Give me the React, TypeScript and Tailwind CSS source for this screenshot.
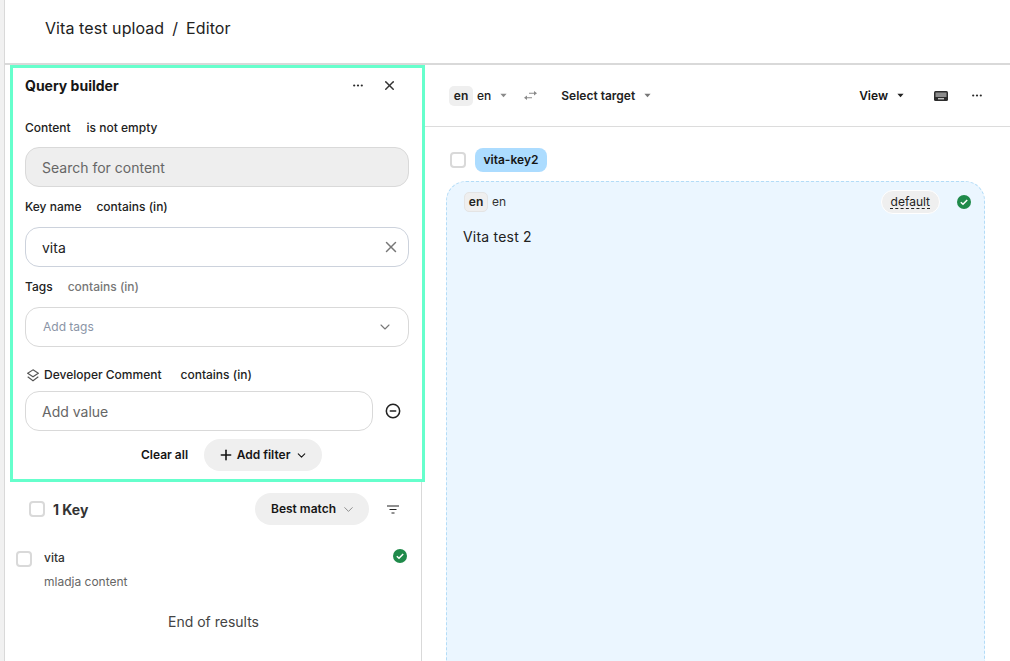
import { ChevronDown, Plus, X, CircleMinus } from "lucide-react";

function Caret({ className = "text-[#6f6f6f]" }: { className?: string }) {
  return (
    <svg viewBox="0 0 8 5" width="7" height="5" className={className} fill="currentColor" aria-hidden>
      <path d="M0.5 0.5h7L4 4.5Z" />
    </svg>
  );
}

function Check() {
  return (
    <svg viewBox="0 0 14 14" width="14" height="14" aria-hidden>
      <circle cx="7" cy="7" r="7" fill="#1f8a4a" />
      <path d="M3.8 7.2 6 9.3l4.2-4.4" fill="none" stroke="#fff" strokeWidth="1.5" />
    </svg>
  );
}

function Box() {
  return <span className="block h-4 w-4 shrink-0 rounded-[4px] border-2 border-[#d9d9d9] bg-white" />;
}

function Dots() {
  return (
    <svg viewBox="0 0 10 3" width="10" height="3" fill="#2a2a2a" aria-hidden>
      <circle cx="1.200" cy="1.500" r="1.100" />
      <circle cx="5" cy="1.500" r="1.100" />
      <circle cx="8.800" cy="1.500" r="1.100" />
    </svg>
  );
}

function KeyboardIcon() {
  return (
    <svg viewBox="0 0 14 10" width="14" height="10" aria-hidden>
      <rect width="14" height="10" rx="1.500" fill="#2c2c2c" />
      <rect x="1.500" y="1.500" width="11" height="4.500" fill="#8c8c8c" />
      <rect x="4" y="7.300" width="6" height="1" fill="#fff" />
    </svg>
  );
}

function SwapIcon() {
  return (
    <svg viewBox="0 0 13 9" width="13" height="9" fill="#8a8a8a" aria-hidden>
      <path d="M5 1.700h5V0l3 2.200-3 2.200V2.700H5Z" />
      <path d="M8 6.300H3V4.600L0 6.800 3 9V7.300h5Z" />
    </svg>
  );
}

function LayersIcon() {
  return (
    <svg viewBox="0 0 12 13" width="12" height="13" fill="none" stroke="#555" strokeWidth="1.100" aria-hidden>
      <path d="M6 .8 11.300 4.300 6 7.800.7 4.300Z" />
      <path d="M.7 7.800 6 11.800l5.300-4" />
    </svg>
  );
}

function SortLines() {
  return (
    <svg viewBox="0 0 12 9" width="12" height="9" fill="none" stroke="#222" strokeWidth="1.200" aria-hidden>
      <path d="M0 1h12M2.500 4.500h7M4.500 8h3" />
    </svg>
  );
}

function QueryBuilder() {
  return (
    <div className="relative z-10 ml-[5px] flex h-[417px] w-[415px] flex-col border-[3px] border-[#66ffcc] bg-white pl-3 pr-3">
      <div className="flex h-[33px] items-center justify-between pt-[1px]">
        <h2 className="text-[14px] font-bold text-[#161616]">Query builder</h2>
        <div className="flex items-center gap-[19px] pr-[13px]">
          <Dots />
          <X size={15} strokeWidth={2.400} className="text-[#333]" />
        </div>
      </div>
      <div className="mt-[17px] flex h-5 items-center gap-4 text-[12px] font-medium text-[#222]">
        <span>Content</span>
        <span>is not empty</span>
      </div>
      <div className="mt-[9px] flex h-10 w-[384px] items-center rounded-[14px] border border-[#d9d9d9] bg-[#eeeeee] pl-4 text-[14px] text-[#666]">
        Search for content
      </div>
      <div className="mt-[10px] flex h-5 items-center gap-[15px] text-[12px] font-medium text-[#222]">
        <span>Key name</span>
        <span>contains (in)</span>
      </div>
      <div className="mt-[10px] flex h-10 w-[384px] items-center justify-between rounded-[14px] border border-[#ccd2dc] pl-4 pr-[8px] text-[14px] text-[#222]">
        <span>vita</span>
        <X size={18} strokeWidth={2} className="text-[#777]" />
      </div>
      <div className="mt-[10px] flex h-5 items-center gap-[15px] text-[12px] font-medium text-[#222]">
        <span>Tags</span>
        <span className="text-[#777]">contains (in)</span>
      </div>
      <div className="mt-[10px] flex h-10 w-[384px] items-center justify-between rounded-[14px] border border-[#d9d9d9] pl-[17px] pr-[15px] text-[12px] text-[#8a94a6]">
        <span>Add tags</span>
        <ChevronDown size={16} strokeWidth={1.600} className="text-[#777]" />
      </div>
      <div className="mt-[18px] flex h-5 items-center text-[12px] font-medium text-[#222]">
        <span className="ml-[2px] flex"><LayersIcon /></span>
        <span className="ml-[5px]">Developer Comment</span>
        <span className="ml-[19px]">contains (in)</span>
      </div>
      <div className="mt-[6px] flex items-center">
        <div className="flex h-10 w-[348px] items-center rounded-[14px] border border-[#d9d9d9] pl-4 text-[14px] text-[#666]">
          Add value
        </div>
        <CircleMinus size={16} strokeWidth={2.300} className="ml-[12px] text-[#222]" />
      </div>
      <div className="mt-2 flex items-center pl-[116px]">
        <span className="text-[12px] font-semibold text-[#161616]">Clear all</span>
        <div className="ml-4 flex h-8 w-[118px] items-center justify-center rounded-full bg-[#efefef] text-[12px] font-semibold text-[#161616]">
          <Plus size={16} strokeWidth={2.400} />
          <span className="ml-[3px]">Add filter</span>
          <ChevronDown size={13} strokeWidth={2} className="ml-[5px]" />
        </div>
      </div>
    </div>
  );
}

function Results() {
  return (
    <div className="flex-1">
      <div className="flex h-[54px] items-center pl-6 pr-[22px]">
        <Box />
        <span className="ml-2 text-[14px] font-bold text-[#333]">1 Key</span>
        <div className="ml-auto flex h-8 w-[114px] items-center rounded-full bg-[#efefef] pl-4 text-[12px] font-semibold text-[#161616]">
          Best match
          <ChevronDown size={15} strokeWidth={1.500} className="ml-[5px] text-[#888]" />
        </div>
        <span className="ml-[18px] flex"><SortLines /></span>
      </div>
      <div className="flex pl-[11px] pr-[14px] pt-[12px]">
        <span className="mt-[3px]"><Box /></span>
        <div className="ml-3 flex-1">
          <div className="text-[12px] font-medium leading-5 text-[#333]">vita</div>
          <div className="mt-1 text-[12px] leading-5 text-[#666]">mladja content</div>
        </div>
        <span className="mt-[1px]"><Check /></span>
      </div>
      <div className="mt-[20px] pl-[1px] text-center text-[14px] leading-5 text-[#444]">End of results</div>
    </div>
  );
}

function Toolbar() {
  return (
    <div className="flex h-[62px] items-center border-b border-[#dcdcdc] pl-[27px] pr-[28px]">
      <span className="flex h-5 w-6 items-center justify-center rounded-[5px] bg-[#efefef] text-[12px] font-semibold text-[#222]">en</span>
      <span className="ml-[4px] text-[12px] font-medium text-[#222]">en</span>
      <span className="ml-[9px]"><Caret className="text-[#8a8a8a]" /></span>
      <span className="ml-[17px] flex"><SwapIcon /></span>
      <span className="ml-[24px] text-[12px] font-semibold text-[#222]">Select target</span>
      <span className="ml-[9px]"><Caret className="text-[#777]" /></span>
      <span className="ml-auto text-[12px] font-semibold text-[#161616]">View</span>
      <span className="ml-[9px]"><Caret className="text-[#222]" /></span>
      <span className="ml-[30px] flex"><KeyboardIcon /></span>
      <span className="ml-[24px] flex"><Dots /></span>
    </div>
  );
}

function KeyCard() {
  return (
    <div className="pl-[28px] pt-[21px]">
      <div className="flex h-6 items-center">
        <Box />
        <span className="ml-[9px] flex h-6 items-center rounded-[8px] bg-[#acdcff] px-[8.500px] text-[12px] font-semibold text-[#161616]">vita-key2</span>
      </div>
      <div className="ml-[-4px] mt-[9px] h-[500px] w-[539px] rounded-t-[20px] border border-b-0 border-dashed border-[#b3dcf7] bg-[#ebf6ff]">
        <div className="flex h-[40px] items-center pl-[17px] pr-[13px]">
          <span className="flex h-5 w-6 items-center justify-center rounded-[5px] border border-[#e4e4e4] bg-[#efefef] text-[12px] font-semibold text-[#222]">en</span>
          <span className="ml-[4px] text-[12px] text-[#333]">en</span>
          <span className="ml-auto flex h-6 items-center rounded-full border border-white bg-[#efefef] px-[9px] text-[12px] text-[#222] underline decoration-dashed underline-offset-2">default</span>
          <span className="ml-[17px] flex"><Check /></span>
        </div>
        <p className="ml-4 mt-[5px] text-[14px] leading-5 tracking-[0.015em] text-[#222]">Vita test 2</p>
      </div>
    </div>
  );
}

export default function App() {
  return (
    <div
      className="flex h-[661px] w-[1010px] overflow-hidden bg-white"
      style={{ fontFamily: "Inter, 'Liberation Sans', sans-serif" }}
    >
      <div className="w-[5px] shrink-0 border-r border-[#d9d9d9] bg-[#f1f1f1]" />
      <div className="flex min-w-0 flex-1 flex-col">
        <header className="flex h-[65px] shrink-0 items-center border-b-2 border-[#d9d9d9] pb-[8px] pl-10 text-[16px] tracking-[0.005em] text-[#222]">
          <span>Vita test upload</span>
          <span className="mx-2">/</span>
          <span>Editor</span>
        </header>
        <div className="flex min-h-0 flex-1">
          <aside className="flex w-[417px] shrink-0 flex-col border-r border-[#d9d9d9]">
            <QueryBuilder />
            <Results />
          </aside>
          <main className="min-w-0 flex-1">
            <Toolbar />
            <KeyCard />
          </main>
        </div>
      </div>
    </div>
  );
}
